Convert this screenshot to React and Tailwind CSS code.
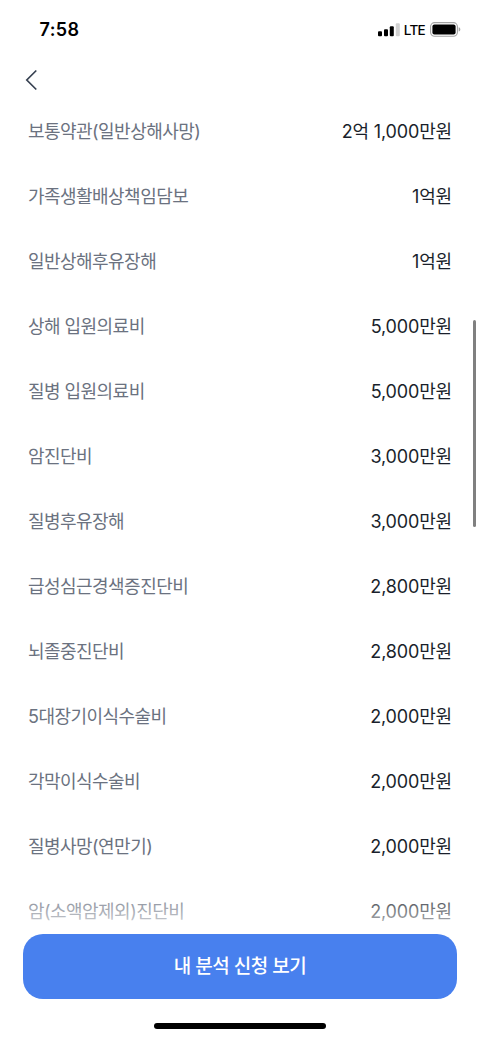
import React from 'react';

const coverages = [
    { name: '보통약관(일반상해사망)', amount: '2억 1,000만원' },
    { name: '가족생활배상책임담보', amount: '1억원' },
    { name: '일반상해후유장해', amount: '1억원' },
    { name: '상해 입원의료비', amount: '5,000만원' },
    { name: '질병 입원의료비', amount: '5,000만원' },
    { name: '암진단비', amount: '3,000만원' },
    { name: '질병후유장해', amount: '3,000만원' },
    { name: '급성심근경색증진단비', amount: '2,800만원' },
    { name: '뇌졸중진단비', amount: '2,800만원' },
    { name: '5대장기이식수술비', amount: '2,000만원' },
    { name: '각막이식수술비', amount: '2,000만원' },
    { name: '질병사망(연만기)', amount: '2,000만원' },
    { name: '암(소액암제외)진단비', amount: '2,000만원' },
];

const StatusBar = () => {
    return (
        <div className="flex h-[59px] items-center justify-between pl-[39.5px] pr-[19px]">
            <span className="text-[18px] font-semibold leading-6 tracking-[0.4px] text-black">7:58</span>
            <div className="flex items-center">
                <svg width="22" height="14" viewBox="0 0 22 14">
                    <rect x="0" y="8.3" width="4" height="5" rx="1" />
                    <rect x="6" y="6.3" width="4" height="7" rx="1" />
                    <rect x="11.8" y="3.2" width="4" height="10.1" rx="1" />
                    <rect x="17.8" y="0.3" width="4" height="13" rx="1" fill="#d1d1d1" />
                </svg>
                <span className="ml-[4px] text-[13.5px] font-medium leading-4 tracking-[-0.7px] text-black">LTE</span>
                <svg className="ml-[5px]" width="31" height="15" viewBox="0 0 31 15">
                    <rect x="0.6" y="0.6" width="26.8" height="13.6" rx="4" fill="none" stroke="#a3a3a3" strokeWidth="1.1" />
                    <rect x="2.4" y="2.4" width="23.2" height="10" rx="2" />
                    <path d="M28.7 5.2c1 .3 1.6 1.2 1.6 2.2s-.6 1.9-1.6 2.2z" fill="#a3a3a3" />
                </svg>
            </div>
        </div>
    );
};

const App = () => {
    return (
        <div className="relative h-[1039px] w-[480px] overflow-hidden bg-white font-['Inter','Noto_Sans_CJK_KR',sans-serif]">
            <StatusBar />
            <header className="flex h-[41px] items-center pl-[25px]">
                <button aria-label="뒤로">
                    <svg width="13" height="22" viewBox="0 0 13 22" fill="none" stroke="#374151" strokeWidth="1.7">
                        <path d="M11.3 1.5L1.8 11l9.5 9.5" />
                    </svg>
                </button>
            </header>
            <ul>
                {coverages.map((item) => (
                    <li key={item.name} className="flex h-[64.95px] items-center justify-between px-[28px] text-[18px] font-[370] leading-6">
                        <span className="tracking-[-0.54px] text-[#6b7280]">{item.name}</span>
                        <span className="tracking-[-0.15px] text-[#1a1f2b]">{item.amount}</span>
                    </li>
                ))}
            </ul>

            {/* scroll indicator */}
            <div className="absolute right-[4px] top-[320px] h-[207px] w-[3px] rounded-full bg-[#808080]" />

            <div className="absolute inset-x-0 bottom-0">
                <div className="h-[40px] bg-gradient-to-b from-white/15 to-white/80" />
                <div className="flex h-[105px] flex-col items-center bg-white">
                    <button className="h-[65px] w-[434px] rounded-[20px] bg-[#4880ee] pt-[2px] text-[19px] font-medium tracking-[-0.5px] text-white">
                        내 분석 신청 보기
                    </button>
                    <div className="mt-[24px] h-[6px] w-[172px] rounded-full bg-black" />
                </div>
            </div>
        </div>
    );
};

export default App;
